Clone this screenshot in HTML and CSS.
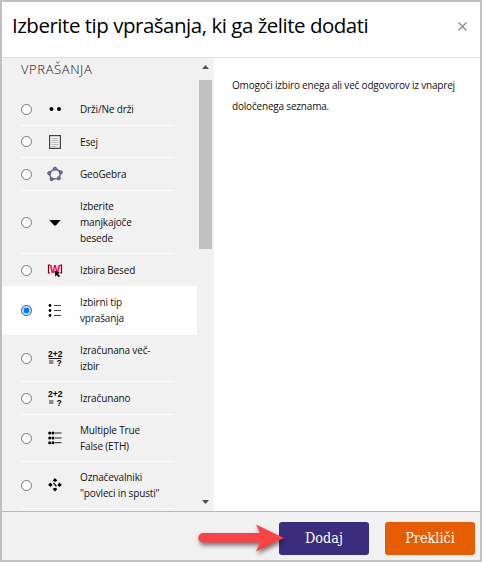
FILE: index.html
```html
<!DOCTYPE html>
<html lang="sl">
  <head>
    <meta charset="utf-8">
    <title>Izberite tip vprašanja</title>
    <link rel="stylesheet" href="styles.css">
  </head>

  <body>
    <form class="dialog" action="javascript: void(0)">
      <div class="dialog-header">
        <h2>Izberite tip vprašanja, ki ga želite dodati</h2>
        <button type="button" class="close-btn" aria-label="Zapri">
          <svg width="9" height="9" viewBox="0 0 9 9"><path d="M.5 .5l8 8M8.5 .5l-8 8" stroke="#888" stroke-width="1.3" /></svg>
        </button>
      </div>

      <div class="dialog-body">
        <div class="type-list">
          <div class="types">
            <h3>VPRAŠANJA</h3>

            <label class="item">
              <span class="item-row">
                <input type="radio" name="qtype">
                <svg class="icon" viewBox="0 0 16 16"><circle cx="4.5" cy="8" r="2" /><circle cx="12" cy="8" r="2" /></svg>
                <span class="name">Drži/Ne drži</span>
              </span>
            </label>

            <label class="item item-short">
              <span class="item-row">
                <input type="radio" name="qtype">
                <svg class="icon" viewBox="0 0 16 16">
                  <rect x="2.6" y="1.6" width="10.8" height="12.8" fill="#f2f4f4" stroke="#444" stroke-width="1.2" />
                  <path d="M5 4.5h6M4.5 6.5h7M4.5 8.5h7M4.5 10.5h7M4.5 12.5h5" stroke="#aab2b2" stroke-width=".9" />
                </svg>
                <span class="name">Esej</span>
              </span>
            </label>

            <label class="item">
              <span class="item-row">
                <input type="radio" name="qtype">
                <svg class="icon" viewBox="0 0 16 16">
                  <path d="M8 2.6L14 6.2 11.8 12.5 4.5 13.2 2 7Z" fill="none" stroke="#777" stroke-width="1.7" />
                  <g fill="#7777c8" stroke="#33334d" stroke-width=".6">
                    <circle cx="8" cy="2.7" r="1.6" /><circle cx="13.8" cy="6.3" r="1.6" /><circle cx="11.8" cy="12.3" r="1.6" /><circle cx="4.6" cy="13.2" r="1.6" /><circle cx="2.2" cy="7.2" r="1.6" />
                  </g>
                </svg>
                <span class="name">GeoGebra</span>
              </span>
            </label>

            <label class="item item-triple">
              <span class="item-row">
                <input type="radio" name="qtype">
                <svg class="icon" viewBox="0 0 16 16"><path d="M2.3 6h11.4L8.8 11.5H7.2Z" /></svg>
                <span class="name">Izberite manjkajoče besede</span>
              </span>
            </label>

            <label class="item item-short item-last">
              <span class="item-row">
                <input type="radio" name="qtype">
                <svg class="icon" viewBox="0 0 16 16">
                  <path d="M3 3H1.5v8H3M13 3h1.5v8H13" fill="none" stroke="#702" stroke-width="1.2" />
                  <text class="letter" x="2.8" y="10.5" textLength="10.5" lengthAdjust="spacingAndGlyphs">W</text>
                  <path d="M7.3 8.5l5.7 2.3-2 1 2 2.3-1.3 1.2-2-2.4-1.2 1.8Z" />
                </svg>
                <span class="name">Izbira Besed</span>
              </span>
            </label>

            <label class="item item-selected">
              <span class="item-row">
                <input type="radio" name="qtype" checked>
                <svg class="icon" viewBox="0 0 16 16">
                  <circle cx="3" cy="3.5" r="1.4" /><circle cx="3" cy="8.5" r="1.4" /><circle cx="3" cy="13.5" r="1.4" />
                  <path d="M7 3.5h7M7 8.5h7M7 13.5h7" stroke="#444" stroke-width="1.2" />
                </svg>
                <span class="name">Izbirni tip vprašanja</span>
              </span>
            </label>

            <label class="item item-double">
              <span class="item-row">
                <input type="radio" name="qtype">
                <svg class="icon" viewBox="0 0 16 16">
                  <text x="1" y="7">2+2<tspan x="9.5" y="15.5">?</tspan></text>
                  <path d="M1.5 8.5h13M2 11h4.5M2 13h4.5" stroke="#222" />
                </svg>
                <span class="name">Izračunana več-izbir</span>
              </span>
            </label>

            <label class="item">
              <span class="item-row">
                <input type="radio" name="qtype">
                <svg class="icon" viewBox="0 0 16 16">
                  <text x="1" y="7">2+2<tspan x="9.5" y="15.5">?</tspan></text>
                  <path d="M2 11h4.5M2 13h4.5" stroke="#222" />
                </svg>
                <span class="name">Izračunano</span>
              </span>
            </label>

            <label class="item item-double">
              <span class="item-row">
                <input type="radio" name="qtype">
                <svg class="icon" viewBox="0 0 16 16">
                  <circle cx="2.7" cy="3" r="1.5" /><circle cx="6" cy="3" r="1.5" /><circle cx="2.7" cy="8" r="1.5" /><circle cx="6" cy="8" r="1.5" /><circle cx="2.7" cy="12.7" r="1.5" /><circle cx="6" cy="12.7" r="1.5" />
                  <path d="M8 3h6.5M8 8h6.5M8 12.7h6.5" stroke="#222" />
                </svg>
                <span class="name">Multiple True False (ETH)</span>
              </span>
            </label>

            <label class="item item-double">
              <span class="item-row">
                <input type="radio" name="qtype">
                <svg class="icon" viewBox="0 0 16 16">
                  <path d="M8 1l2.4 3H5.6ZM8 14.5l2.4-3H5.6ZM1 7.8l3-2.4v4.8ZM15 7.8l-3-2.4v4.8Z" />
                  <circle cx="8" cy="3.3" r="1.5" /><circle cx="8" cy="12.3" r="1.5" /><circle cx="3.8" cy="7.8" r="1.5" /><circle cx="12.2" cy="7.8" r="1.5" />
                  <path d="M6.5 6l3 3.5" stroke="#222" stroke-width="1.4" />
                </svg>
                <span class="name">Označevalniki "povleci in spusti"</span>
              </span>
            </label>
          </div>

          <div class="scrollbar">
            <svg width="7" height="4" viewBox="0 0 7 4"><path d="M0 4L3.5 0 7 4Z" /></svg>
            <div class="thumb"></div>
            <svg width="7" height="4" viewBox="0 0 7 4"><path d="M0 0h7L3.5 4Z" /></svg>
          </div>
        </div>

        <p class="description">Omogoči izbiro enega ali več odgovorov iz vnaprej določenega seznama.</p>
      </div>

      <div class="dialog-footer">
        <button type="submit" class="btn btn-add">Dodaj</button>
        <button type="button" class="btn btn-cancel">Prekliči</button>
        <svg class="arrow" width="100" height="40" viewBox="0 0 100 40">
          <path d="M9 12H66L62 3.5 90 17 62 30.5 66 21.5H9A4.7 4.7 0 0 1 9 12Z" fill="#fc4245" />
        </svg>
      </div>
    </form>
  </body>
</html>
```

FILE: styles.css
```css
* {
  box-sizing: border-box;
  margin: 0;
  padding: 0;
}

body {
  font-family: "Open Sans", "Noto Sans", sans-serif;
  color: #111;
}

.dialog {
  display: flex;
  flex-direction: column;
  width: 482px;
  height: 562px;
  border: 2px solid #c0c0c0;
  background: white;
}

.dialog-header {
  display: flex;
  justify-content: space-between;
  align-items: center;
  height: 56px;
  padding: 0 13px 6px 10px;
  border-bottom: 1px solid #dedede;
}

.dialog-header h2 {
  padding-bottom: 3px;
  font-size: 20.5px;
  font-weight: 400;
  letter-spacing: -0.48px;
  color: black;
  white-space: nowrap;
}

.close-btn {
  display: flex;
  border: none;
  background: none;
}

.dialog-body {
  display: flex;
  height: 453px;
}

.type-list {
  display: flex;
  width: 212px;
  background: #f1f1f1;
}

.types {
  width: 195px;
}

.types h3 {
  height: 35px;
  padding-left: 19px;
  font-size: 13px;
  font-weight: 300;
  letter-spacing: 0.6px;
  line-height: 23px;
}

.item {
  display: block;
  height: 33px;
  padding: 0 23px 0 19px;
}

.item-short {
  height: 32px;
}

.item-double {
  height: 47px;
}

.item-triple {
  height: 63px;
}

.item-row {
  display: flex;
  align-items: center;
  height: 100%;
  border-bottom: 1px solid white;
}

.item-last .item-row {
  border: none;
}

.item-selected {
  height: 49px;
  background: white;
}

.item input {
  appearance: none;
  width: 11px;
  height: 11px;
  border: 1px solid #767676;
  border-radius: 50%;
  background: white;
}

.item input:checked {
  border-color: #0075ff;
  background: #0075ff;
  box-shadow: inset 0 0 0 1.5px white;
}

.icon {
  width: 16px;
  height: 16px;
  margin: 0 17px 0 15px;
}

.icon text {
  font: bold 8.5px "Liberation Sans", sans-serif;
}

.icon .letter {
  font-size: 10.5px;
  fill: #f00036;
}

.name {
  width: 84px;
  font-size: 10px;
  letter-spacing: -0.15px;
  line-height: 16px;
}

.scrollbar {
  display: flex;
  flex-direction: column;
  align-items: center;
  width: 17px;
  padding: 7px 0;
  fill: #505050;
}

.thumb {
  width: 13px;
  height: 169px;
  margin: 11px 0 auto;
  background: #c1c1c1;
}

.description {
  padding: 17px 10px 0 18px;
  font-size: 10px;
  letter-spacing: -0.19px;
  line-height: 21px;
}

.dialog-footer {
  position: relative;
  display: flex;
  flex: 1;
  justify-content: flex-end;
  gap: 16px;
  padding: 10px 5px 0 0;
  border-top: 1px solid #b8b8b8;
  background: #f1f1f1;
}

.btn {
  width: 90px;
  height: 33px;
  padding-bottom: 1px;
  border: none;
  border-radius: 3px;
  color: white;
  font-family: "DejaVu Serif Condensed", "DejaVu Serif", serif;
  font-size: 14.3px;
}

.btn-add {
  background: #3b2c7d;
}

.btn-cancel {
  background: #e65c00;
}

/* pointer drawn over the footer */
.arrow {
  position: absolute;
  left: 192px;
  top: 9px;
  filter: drop-shadow(1px 3px 2px rgba(0, 0, 0, 0.5));
}
```
